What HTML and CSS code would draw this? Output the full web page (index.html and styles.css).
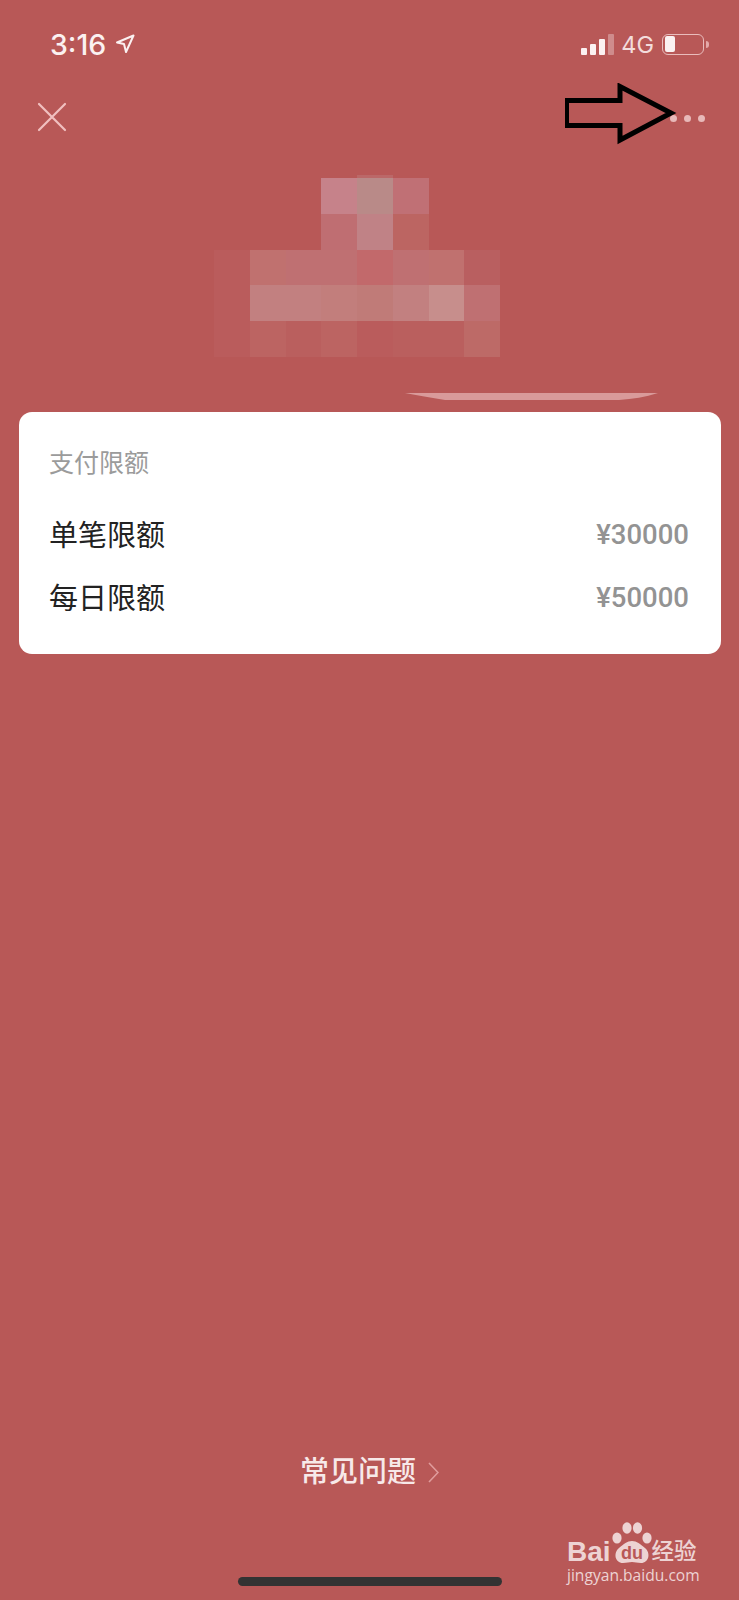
FILE: index.html
```html
<!DOCTYPE html>
<html lang="zh-CN">
    <head>
        <meta charset="UTF-8" />
        <meta name="viewport" content="width=device-width, initial-scale=1.0" />
        <title>支付限额</title>
        <link rel="stylesheet" href="styles.css">
    </head>
    <body>
        <div class="page">
            <!-- status bar -->
            <div class="status">
                <div class="status-left">
                    <span class="time">3:16</span>
                    <svg class="loc" width="20" height="20" viewBox="0 0 20 20">
                        <path d="M2 8.5 L18.5 1.5 L11 18 L9 10 Z" />
                    </svg>
                </div>
                <div class="status-right">
                    <div class="signal">
                        <i class="b1"></i><i class="b2"></i><i class="b3"></i><i class="b4"></i>
                    </div>
                    <span class="net">4G</span>
                    <div class="battery"><i class="level"></i></div>
                    <i class="nub"></i>
                </div>
            </div>

            <!-- toolbar -->
            <div class="toolbar">
                <svg class="close" width="30" height="30" viewBox="0 0 30 30">
                    <path d="M2 2 L28 28 M28 2 L2 28" />
                </svg>
                <div class="more"><i></i><i></i><i></i></div>
            </div>

            <!-- blurred account name -->
            <div class="hero">
                <div class="mosaic">
                    <i class="gap"></i><i class="gap"></i><i class="gap"></i>
                    <i class="c1a"></i><i class="c1b"></i><i class="c1c"></i>
                    <i class="gap"></i><i class="gap"></i>

                    <i class="gap"></i><i class="gap"></i><i class="gap"></i>
                    <i class="c2a"></i><i class="c2b"></i><i class="c2c"></i>
                    <i class="gap"></i><i class="gap"></i>

                    <i class="c0"></i><i class="c3a"></i><i class="c3b"></i><i class="c3b"></i>
                    <i class="c3c"></i><i class="c3b"></i><i class="c3a"></i><i class="c3d"></i>

                    <i class="c0"></i><i class="c4a"></i><i class="c4a"></i><i class="c4b"></i>
                    <i class="c4c"></i><i class="c4a"></i><i class="c4d"></i><i class="c3b"></i>

                    <i class="c0"></i><i class="c5a"></i><i class="c5b"></i><i class="c5a"></i>
                    <i class="c0"></i><i class="c5b"></i><i class="c5b"></i><i class="c5c"></i>
                </div>
                <svg class="streak" width="254" height="9" viewBox="0 0 254 9">
                    <path d="M0 0 L253 0 C240 4 228 6 214 7 L40 7 C26 5 12 2 0 0 Z" />
                </svg>
            </div>

            <!-- limits -->
            <div class="card">
                <div class="card-title">支付限额</div>
                <div class="row">
                    <span class="row-name">单笔限额</span>
                    <span class="row-value">¥30000</span>
                </div>
                <div class="row">
                    <span class="row-name">每日限额</span>
                    <span class="row-value">¥50000</span>
                </div>
            </div>

            <div class="faq">
                <span>常见问题</span>
                <svg class="chevron" width="11" height="21" viewBox="0 0 11 21">
                    <path d="M1 1 L10 10.5 L1 20" />
                </svg>
            </div>
            <div class="home-bar"></div>

            <!-- arrow annotation -->
            <svg class="arrow" width="120" height="64" viewBox="0 0 120 64">
                <path d="M1.5 17.5 H55 V3.5 L106 30 L55 57 V42.5 H1.5 Z" />
            </svg>

            <!-- watermark -->
            <div class="mark">
                <div class="mark-logo">
                    <span class="mark-bai">Bai</span>
                    <svg class="paw" width="40" height="42" viewBox="0 0 40 42">
                        <ellipse cx="5" cy="16" rx="4.6" ry="5.6" />
                        <ellipse cx="15" cy="6" rx="4.6" ry="5.8" />
                        <ellipse cx="25.5" cy="6" rx="4.6" ry="5.8" />
                        <ellipse cx="35" cy="16" rx="4.6" ry="5.6" />
                        <path d="M20 19 C25 19 28 22 33 26 C39 31 37 41 29 41 C25 41 23 40 20 40 C17 40 15 41 11 41 C3 41 1 31 7 26 C12 22 15 19 20 19 Z" />
                        <text x="20" y="37" text-anchor="middle">du</text>
                    </svg>
                    <span class="mark-cn">经验</span>
                </div>
                <div class="mark-url">jingyan.baidu.com</div>
            </div>
        </div>
    </body>
</html>
```

FILE: styles.css
```css
* {
    margin: 0;
    padding: 0;
    box-sizing: border-box;
}
body {
    font-family: "Inter", "Noto Sans CJK SC", sans-serif;
    background-color: #b85857;
}
.page {
    position: relative;
    width: 739px;
    height: 1600px;
    overflow: hidden;
    display: flex;
    flex-direction: column;
    background-color: #b85857;
}

/* status bar */
.status {
    height: 88px;
    display: flex;
    justify-content: space-between;
    align-items: center;
    padding: 0 30px 0 50px;
    color: #fbf1f1;
}
.status-left,
.status-right {
    display: flex;
    align-items: center;
}
.time {
    font-size: 28.5px;
    font-weight: 500;
}
.loc {
    margin-left: 9px;
}
.loc path {
    fill: none;
    stroke: #fbf1f1;
    stroke-width: 2;
    stroke-linejoin: round;
}
.signal {
    display: flex;
    align-items: flex-end;
    gap: 3px;
    height: 21px;
}
.signal i {
    width: 6px;
    background-color: #fbf1f1;
    border-radius: 1px;
}
.signal .b1 { height: 7px; }
.signal .b2 { height: 11px; }
.signal .b3 { height: 16px; }
.signal .b4 { height: 21px; background-color: #cf8c8c; }
.net {
    font-size: 23.5px;
    margin-left: 7px;
    color: #f3dcdc;
}
.battery {
    width: 42px;
    height: 21px;
    margin-left: 8px;
    padding: 1.5px 2px;
    border: 1.5px solid #e9bcbc;
    border-radius: 6px;
}
.level {
    display: block;
    width: 10px;
    height: 100%;
    background-color: #fbf1f1;
    border-radius: 2px;
}
.nub {
    width: 3px;
    height: 7px;
    margin-left: 2px;
    background-color: #e4a9a9;
    border-radius: 0 3px 3px 0;
}

/* toolbar */
.toolbar {
    height: 55px;
    display: flex;
    justify-content: space-between;
    align-items: center;
    padding: 0 34px 0 37px;
}
.close {
    margin-top: 2px;
}
.close path {
    fill: none;
    stroke: #f1c0c0;
    stroke-width: 2.2;
    stroke-linecap: round;
}
.more {
    display: flex;
    gap: 7px;
    margin-top: 6px;
}
.more i {
    width: 7px;
    height: 7px;
    border-radius: 50%;
    background-color: #e8b9b9;
}

/* blurred name */
.hero {
    height: 269px;
    padding-top: 35px;
}
.mosaic {
    display: grid;
    grid-template-columns: repeat(8, 35.75px);
    grid-auto-rows: 35.75px;
    margin-left: 214px;
}
.gap { background-color: transparent; }
.c0 { background-color: #ba5c5c; }
.c1a { background-color: #c6828a; }
.c1b { background-color: #b98a88; box-shadow: 0 -3px 0 #bb6868; }
.c1c { background-color: #c07075; }
.c2a { background-color: #bf6e72; }
.c2b { background-color: #c08286; }
.c2c { background-color: #bc6562; }
.c3a { background-color: #c0716f; }
.c3b { background-color: #bf7072; }
.c3c { background-color: #c2696b; }
.c3d { background-color: #b95f60; }
.c4a { background-color: #c28080; }
.c4b { background-color: #c27e7c; }
.c4c { background-color: #c07b78; }
.c4d { background-color: #c78e8c; }
.c5a { background-color: #bc6462; }
.c5b { background-color: #ba5f5e; }
.c5c { background-color: #bd6a67; }
.streak {
    display: block;
    margin: 36px 0 0 405px;
}
.streak path {
    fill: #d99a9a;
}

/* limits card */
.card {
    height: 242px;
    margin: 0 18px 0 18.5px;
    padding: 33px 32px 0 30.5px;
    background-color: #fff;
    border-radius: 13px;
}
.card-title {
    height: 36px;
    margin-bottom: 21px;
    font-size: 25px;
    line-height: 36px;
    color: #9b9b9b;
}
.row {
    height: 63px;
    display: flex;
    justify-content: space-between;
    align-items: center;
}
.row-name {
    font-size: 29px;
    line-height: 40px;
    margin-top: 4px;
    color: #222;
}
.row-value {
    font-family: "Roboto", sans-serif;
    font-size: 27.5px;
    font-weight: 500;
    margin-top: 2px;
    color: #939393;
}

/* footer link */
.faq {
    margin-top: auto;
    margin-bottom: 85px;
    display: flex;
    justify-content: center;
    align-items: center;
    gap: 12px;
    font-size: 29px;
    font-weight: 500;
    line-height: 40px;
    color: #f7e9e9;
}
.chevron path {
    fill: none;
    stroke: #e09c9c;
    stroke-width: 1.6;
}
.home-bar {
    width: 264px;
    height: 9px;
    margin: 0 0 14px 238px;
    background-color: #333;
    border-radius: 5px;
}

/* overlays */
.arrow {
    position: absolute;
    left: 565px;
    top: 83px;
}
.arrow path {
    fill: none;
    stroke: #000;
    stroke-width: 5;
    stroke-linejoin: miter;
}
.mark {
    position: absolute;
    left: 567px;
    top: 1522px;
    color: #edd3d3;
}
.mark-logo {
    display: flex;
    align-items: flex-end;
    height: 42px;
}
.mark-bai {
    font-family: "Liberation Sans", sans-serif;
    font-size: 28px;
    font-weight: 700;
    line-height: 24px;
}
.paw {
    margin-left: 1px;
    flex-shrink: 0;
    fill: #edd3d3;
}
.paw text {
    font-family: "Liberation Sans", sans-serif;
    font-size: 18px;
    font-weight: 700;
    fill: #b85857;
}
.mark-cn {
    font-size: 22.5px;
    font-weight: 500;
    line-height: 27px;
}
.mark-url {
    font-family: "Open Sans", sans-serif;
    font-size: 15.6px;
    line-height: 22px;
}
```
